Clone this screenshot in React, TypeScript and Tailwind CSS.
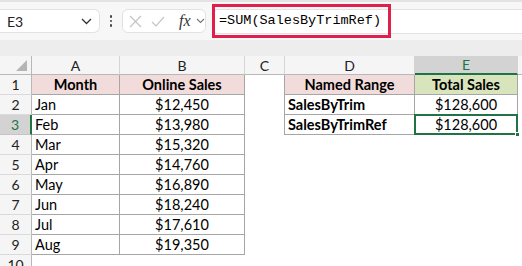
import React from "react";

const cols = [32, 88, 125, 40, 130, 103];

const months: [string, string][] = [
  ["Jan", "$12,450"],
  ["Feb", "$13,980"],
  ["Mar", "$15,320"],
  ["Apr", "$14,760"],
  ["May", "$16,890"],
  ["Jun", "$18,240"],
  ["Jul", "$17,610"],
  ["Aug", "$19,350"],
];

const font = { fontFamily: "Lato, 'Open Sans', sans-serif" };

function RowHead({ n, active }: { n: number; active?: boolean }) {
  return (
    <div
      className={
        "flex h-full w-[32px] shrink-0 items-center justify-center border-b text-[14px] " +
        (active
          ? "border-b-[#c6c6c6] border-r-2 border-r-[#217346] bg-[#d3d3d3] text-[#217346]"
          : "border-b-[#dadada] border-r border-r-[#b8b8b8] bg-[#f5f5f5] text-[#222]")
      }
    >
      {n}
    </div>
  );
}

function Cell({
  w,
  children,
  className = "",
}: {
  w: number;
  children?: React.ReactNode;
  className?: string;
}) {
  return (
    <div
      className={"flex h-full shrink-0 items-center text-[14.5px] text-black " + className}
      style={{ width: w }}
    >
      {children}
    </div>
  );
}

export default function App() {
  const rows = Array.from({ length: 10 }, (_, i) => i + 1);
  return (
    <div className="h-[266px] w-[522px] overflow-hidden bg-white" style={font}>
      {/* formula bar */}
      <div className="relative flex h-[40px] items-center border-t-2 border-t-[#e3e3e3] bg-[#f7f7f7]">
        <div className="flex h-[24px] w-[100px] items-center justify-between rounded-r-md border border-l-0 border-[#e2e2e2] bg-white pl-[7px] pr-[7px] text-[14px] text-[#222]">
          <span>E3</span>
          <svg width="11" height="7" viewBox="0 0 11 7" fill="none">
            <path d="M1 1l4.5 4.5L10 1" stroke="#333" strokeWidth="1.3" />
          </svg>
        </div>
        <div className="flex w-[22px] flex-col items-center gap-[2px]">
          <span className="h-[2.5px] w-[2.5px] rounded-full bg-[#444]" />
          <span className="h-[2.5px] w-[2.5px] rounded-full bg-[#444]" />
          <span className="h-[2.5px] w-[2.5px] rounded-full bg-[#444]" />
        </div>
        <div className="flex h-[24px] w-[84px] items-center rounded-md border border-[#e2e2e2] bg-white pl-[6px]">
          <svg width="13" height="13" viewBox="0 0 13 13" fill="none">
            <path d="M1 1l11 11M12 1L1 12" stroke="#c4c4c4" strokeWidth="1.2" />
          </svg>
          <svg className="ml-[9px]" width="14" height="11" viewBox="0 0 14 11" fill="none">
            <path d="M1 6l4 4L13 1" stroke="#c4c4c4" strokeWidth="1.2" />
          </svg>
          <span
            className="ml-[14px] text-[16px] italic leading-none text-[#333]"
            style={{ fontFamily: "'Liberation Serif', serif" }}
          >
            fx
          </span>
          <svg className="ml-[5px]" width="9" height="6" viewBox="0 0 9 6" fill="none">
            <path d="M1 1l3.5 3.5L8 1" stroke="#777" strokeWidth="1.1" />
          </svg>
        </div>
        <div className="ml-[6px] flex h-[25px] flex-1 items-center rounded-l-md border border-r-0 border-[#e2e2e2] bg-white pl-[6px]">
          <span
            className="text-[13.5px] text-black"
            style={{ fontFamily: "'Liberation Mono', 'DejaVu Sans Mono', monospace" }}
          >
            =SUM(SalesByTrimRef)
          </span>
        </div>
        <div className="absolute left-[212px] top-[2px] h-[34px] w-[179px] border-[3px] border-[#e0204c]" />
      </div>
      <div className="h-[16px] bg-[#ededed]" />

      {/* column headers */}
      <div className="flex h-[19px] bg-[#f5f5f5] text-[14px] text-[#222]">
        <div className="relative w-[32px] shrink-0 border-b border-r border-[#b8b8b8]">
          <svg className="absolute bottom-[3px] right-[4px]" width="11" height="11" viewBox="0 0 11 11">
            <path d="M11 0V11H0Z" fill="#b5b5b5" />
          </svg>
        </div>
        {["A", "B", "C", "D"].map((c, i) => (
          <div
            key={c}
            className="flex shrink-0 items-center justify-center border-b border-r border-b-[#b8b8b8] border-r-[#d4d4d4]"
            style={{ width: cols[i + 1] }}
          >
            {c}
          </div>
        ))}
        <div className="flex w-[103px] shrink-0 items-center justify-center border-b-2 border-r border-b-[#217346] border-r-[#d4d4d4] bg-[#d3d3d3] text-[#217346]">
          E
        </div>
        <div className="flex-1 border-b border-[#b8b8b8]" />
      </div>

      {/* rows */}
      {rows.map((r) => {
        const m = r >= 2 && r <= 9 ? months[r - 2] : null;
        return (
          <div key={r} className="flex h-[20px]">
            <RowHead n={r} active={r === 3} />
            {r === 1 ? (
              <>
                <Cell w={88} className="justify-center border-b border-r border-[#a6a6a6] bg-[#f2dcdb] font-bold">
                  Month
                </Cell>
                <Cell w={125} className="justify-center border-b border-r border-[#a6a6a6] bg-[#f2dcdb] font-bold">
                  Online Sales
                </Cell>
              </>
            ) : m ? (
              <>
                <Cell w={88} className="border-b border-r border-[#a6a6a6] pl-[3px]">
                  {m[0]}
                </Cell>
                <Cell w={125} className="justify-center border-b border-r border-[#a6a6a6]">
                  {m[1]}
                </Cell>
              </>
            ) : (
              <>
                <Cell w={88} />
                <Cell w={125} />
              </>
            )}
            <Cell w={40} className={r <= 3 ? "border-r border-[#a6a6a6]" : ""} />
            {r === 1 && (
              <>
                <Cell w={130} className="justify-center border-b border-r border-[#a6a6a6] bg-[#f2dcdb] font-bold">
                  Named Range
                </Cell>
                <Cell w={103} className="justify-center border-b border-r border-[#a6a6a6] bg-[#d8e4bc] font-bold">
                  Total Sales
                </Cell>
              </>
            )}
            {r === 2 && (
              <>
                <Cell w={130} className="border-b border-r border-[#a6a6a6] pl-[3px] font-bold">
                  SalesByTrim
                </Cell>
                <Cell w={103} className="justify-center border-b border-r border-[#a6a6a6]">
                  $128,600
                </Cell>
              </>
            )}
            {r === 3 && (
              <>
                <Cell w={130} className="border-b border-r border-[#a6a6a6] pl-[3px] font-bold">
                  SalesByTrimRef
                </Cell>
                <Cell w={103} className="relative justify-center border-b border-r border-[#a6a6a6]">
                  $128,600
                  <div className="absolute -left-[1px] -top-[1px] h-[21px] w-[104px] border-2 border-[#217346]" />
                  <div className="absolute -bottom-[3px] -right-[3px] h-[5px] w-[5px] border border-white bg-[#217346]" />
                </Cell>
              </>
            )}
          </div>
        );
      })}
    </div>
  );
}
